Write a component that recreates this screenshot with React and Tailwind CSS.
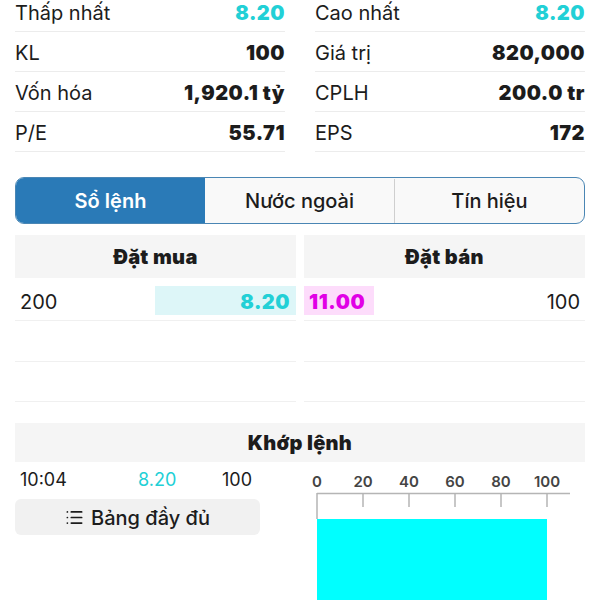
import React from "react";
import { List } from "lucide-react";

const CYAN = "text-[#22d0d6]";

function StatRow({ label, value, accent }) {
  return (
    <div className="flex h-[40px] items-center justify-between border-b border-[#ececec] pt-[2px]">
      <span className="text-[20px] text-[#1c1c1c]">{label}</span>
      <span className={`text-[20px] font-black tracking-[0.5px] ${accent ? CYAN : "text-[#1c1c1c]"}`}>{value}</span>
    </div>
  );
}

export default function App() {
  const left = [
    ["Thấp nhất", "8.20", true],
    ["KL", "100"],
    ["Vốn hóa", "1,920.1 tỷ"],
    ["P/E", "55.71"],
  ];
  const right = [
    ["Cao nhất", "8.20", true],
    ["Giá trị", "820,000"],
    ["CPLH", "200.0 tr"],
    ["EPS", "172"],
  ];
  const ticks = [0, 20, 40, 60, 80, 100];
  return (
    <div
      className="h-[600px] w-[600px] overflow-hidden bg-white px-[15px]"
      style={{ fontFamily: "Inter, 'Noto Sans', sans-serif" }}
    >
      <div className="-mt-[8px] grid grid-cols-2 gap-x-[30px]">
        <div className="flex flex-col">
          {left.map(([l, v, a]) => (
            <StatRow key={l} label={l} value={v} accent={a} />
          ))}
        </div>
        <div className="flex flex-col">
          {right.map(([l, v, a]) => (
            <StatRow key={l} label={l} value={v} accent={a} />
          ))}
        </div>
      </div>

      <div className="mt-[25px] flex h-[47px] overflow-hidden rounded-[9px] border-[1.5px] border-[#4a86b4] bg-[#f9f9f9] pt-[1px]">
        <div className="-mt-[1px] flex flex-1 items-center justify-center bg-[#2a7ab7] pt-[1px] text-[20px] font-semibold text-white">
          Sổ lệnh
        </div>
        <div className="flex flex-1 items-center justify-center border-r border-[#cfcfcf] text-[20px] font-medium text-[#1c1c1c]">
          Nước ngoài
        </div>
        <div className="flex flex-1 items-center justify-center text-[20px] font-medium text-[#1c1c1c]">
          Tín hiệu
        </div>
      </div>

      <div className="mt-[11px] grid grid-cols-2 gap-x-[8px]">
        <div className="flex flex-col">
          <div className="flex h-[43px] items-center justify-center bg-[#f5f5f5] text-[20px] font-black tracking-[0.3px] text-[#1c1c1c]">
            Đặt mua
          </div>
          <div className="mt-[3px] flex h-[40px] items-center border-b border-[#f0f0f0]">
            <span className="flex-1 pl-[5px] pt-[2px] text-[20px] text-[#1c1c1c]">200</span>
            <span className={`flex h-[29px] w-[141px] items-center justify-end bg-[#ddf6f8] pr-[6px] pt-[2px] text-[20px] font-black tracking-[0.5px] ${CYAN}`}>
              8.20
            </span>
          </div>
          <div className="h-[41px] border-b border-[#f0f0f0]" />
          <div className="h-[40px] border-b border-[#f0f0f0]" />
        </div>
        <div className="flex flex-col">
          <div className="flex h-[43px] items-center justify-center bg-[#f5f5f5] text-[20px] font-black tracking-[0.3px] text-[#1c1c1c]">
            Đặt bán
          </div>
          <div className="mt-[3px] flex h-[40px] items-center border-b border-[#f0f0f0]">
            <span className="flex h-[29px] w-[70px] items-center bg-[#fddcfb] pl-[5px] pt-[2px] text-[20px] font-black tracking-[0.6px] text-[#e100e6]">
              11.00
            </span>
            <span className="flex-1 pr-[5px] pt-[2px] text-right text-[20px] text-[#1c1c1c]">100</span>
          </div>
          <div className="h-[41px] border-b border-[#f0f0f0]" />
          <div className="h-[40px] border-b border-[#f0f0f0]" />
        </div>
      </div>

      <div className="mt-[21px] flex h-[39px] items-center justify-center bg-[#f5f5f5] pt-[1px] text-[20px] font-black tracking-[0.3px] text-[#1c1c1c]">
        Khớp lệnh
      </div>

      <div className="flex">
        <div className="flex w-[245px] shrink-0 flex-col">
          <div className="flex h-[34px] items-center text-[18px] text-[#1c1c1c]">
            <span className="w-[123px] pl-[5px]">10:04</span>
            <span className={`w-[84px] ${CYAN}`}>8.20</span>
            <span>100</span>
          </div>
          <div className="mt-[3px] flex h-[36px] items-center justify-center gap-[7px] rounded-[6px] bg-[#f1f1f1] pt-[1px] text-[20px] font-medium text-[#1c1c1c]">
            <List size={19} strokeWidth={2.2} />
            <span>Bảng đầy đủ</span>
          </div>
        </div>
        <div className="ml-[45px] shrink-0">
          <svg width="270" height="140" viewBox="0 0 270 140">
            {ticks.map((t, i) => (
              <text
                key={t}
                x={12 + i * 46}
                y={25}
                textAnchor="middle"
                fontSize="15"
                fontWeight="600"
                fill="#444"
                fontFamily="Inter, sans-serif"
              >
                {t}
              </text>
            ))}
            <line x1="12" y1="31.5" x2="265" y2="31.5" stroke="#b5b5b5" strokeWidth="1.5" />
            {ticks.map((t, i) => (
              <line
                key={t}
                x1={12 + i * 46}
                y1="31"
                x2={12 + i * 46}
                y2={i === 0 ? 57 : 45}
                stroke="#b5b5b5"
                strokeWidth="1.5"
              />
            ))}
            <rect x="12" y="57" width="230" height="90" fill="#00ffff" />
          </svg>
        </div>
      </div>
    </div>
  );
}
